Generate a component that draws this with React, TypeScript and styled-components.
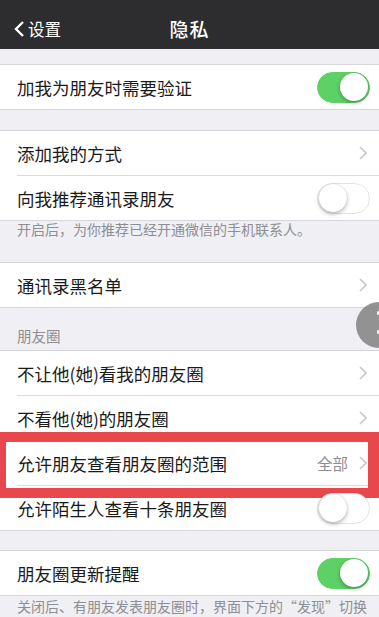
import React from 'react'
import styled, { createGlobalStyle } from 'styled-components'

const GlobalStyle = createGlobalStyle`
  html, body {
    margin: 0;
    padding: 0;
    background: #efeff4;
  }
  body {
    font-family: 'Noto Sans CJK SC', 'Noto Sans', sans-serif;
    overflow: hidden;
  }
`

const Page = styled.div`
  position: relative;
  width: 379px;
  height: 617px;
  overflow: hidden;
  background: #efeff4;
`

const NavBar = styled.div`
  height: 49px;
  padding-top: 8px;
  box-sizing: border-box;
  background: #2d2d30;
  display: grid;
  grid-template-columns: 1fr auto 1fr;
  align-items: center;
  color: #fff;
`

const BackButton = styled.div`
  display: flex;
  align-items: center;
  gap: 3px;
  padding-left: 13px;
  font-size: 16.5px;
`

const Title = styled.div`
  font-size: 19px;
  font-weight: 500;
  letter-spacing: 1px;
`

const Group = styled.div<{ $gap: number }>`
  margin-top: ${(p) => p.$gap}px;
  background: #fff;
  border-top: 1px solid #d6d6da;
  border-bottom: 1px solid #d6d6da;
`

const Row = styled.div`
  position: relative;
  height: 44px;
  display: flex;
  align-items: center;
  padding: 0 9px 0 17px;
  font-size: 17.5px;
  color: #1a1a1a;
`

const Label = styled.span`
  flex: 1;
  white-space: nowrap;
`

const Separator = styled.div`
  height: 1px;
  margin-left: 17px;
  background: #dcdce0;
`

const Detail = styled.span`
  font-size: 15.5px;
  color: #8e8e93;
  margin-right: 11px;
`

const Chevron = styled.svg`
  width: 8px;
  height: 14px;
  margin-right: 3px;
`

const Track = styled.div<{ $on: boolean }>`
  width: 53px;
  height: 31px;
  box-sizing: border-box;
  border-radius: 16px;
  display: flex;
  align-items: center;
  justify-content: ${(p) => (p.$on ? 'flex-end' : 'flex-start')};
  padding: 0 1px;
  background: ${(p) => (p.$on ? '#5dd166' : '#fff')};
  border: 1.5px solid ${(p) => (p.$on ? '#5dd166' : '#e4e4e8')};
`

const Knob = styled.div`
  width: 28px;
  height: 28px;
  border-radius: 50%;
  background: #fff;
  box-shadow: 0 2px 4px rgba(0, 0, 0, 0.28), 0 0 1px rgba(0, 0, 0, 0.2);
`

const Note = styled.div<{ $top: number; $bottom: number }>`
  padding: ${(p) => p.$top}px 6px ${(p) => p.$bottom}px 17px;
  font-size: 14px;
  line-height: 17px;
  color: #8e8e93;
`

const SectionHeader = styled.div`
  padding: 19px 17px 5px;
  font-size: 14.5px;
  line-height: 18px;
  color: #8e8e93;
`

const Highlight = styled.div`
  position: absolute;
  top: -9px;
  bottom: -13px;
  left: 0;
  right: 0;
  border-style: solid;
  border-color: #e8474c;
  border-width: 10px 11px 10px 6px;
  pointer-events: none;
`

const FloatingButton = styled.svg`
  position: absolute;
  top: 302px;
  left: 356px;
  width: 46px;
  height: 46px;
`

const ChevronIcon = () => (
  <Chevron viewBox="0 0 8 14">
    <path d="M1 1 L7 7 L1 13" fill="none" stroke="#c7c7cc" strokeWidth="1.6" />
  </Chevron>
)

const Toggle = ({ on }: { on: boolean }) => (
  <Track $on={on}>
    <Knob />
  </Track>
)

export default function App() {
  return (
    <Page>
      <GlobalStyle />
      <NavBar>
        <BackButton>
          <svg width="12" height="16" viewBox="0 0 12 16">
            <path d="M10 1 L3 8 L10 15" fill="none" stroke="#fff" strokeWidth="2.4" />
          </svg>
          设置
        </BackButton>
        <Title>隐私</Title>
        <div />
      </NavBar>

      <Group $gap={15}>
        <Row>
          <Label>加我为朋友时需要验证</Label>
          <Toggle on />
        </Row>
      </Group>

      <Group $gap={20}>
        <Row>
          <Label>添加我的方式</Label>
          <ChevronIcon />
        </Row>
        <Separator />
        <Row>
          <Label>向我推荐通讯录朋友</Label>
          <Toggle on={false} />
        </Row>
      </Group>
      <Note $top={0} $bottom={24}>开启后，为你推荐已经开通微信的手机联系人。</Note>

      <Group $gap={0}>
        <Row>
          <Label>通讯录黑名单</Label>
          <ChevronIcon />
        </Row>
      </Group>

      <SectionHeader>朋友圈</SectionHeader>
      <Group $gap={0}>
        <Row>
          <Label>不让他(她)看我的朋友圈</Label>
          <ChevronIcon />
        </Row>
        <Separator />
        <Row>
          <Label>不看他(她)的朋友圈</Label>
          <ChevronIcon />
        </Row>
        <Separator />
        <Row>
          <Label>允许朋友查看朋友圈的范围</Label>
          <Detail>全部</Detail>
          <ChevronIcon />
          <Highlight />
        </Row>
        <Separator />
        <Row>
          <Label>允许陌生人查看十条朋友圈</Label>
          <Toggle on={false} />
        </Row>
      </Group>

      <Group $gap={19}>
        <Row>
          <Label>朋友圈更新提醒</Label>
          <Toggle on />
        </Row>
      </Group>
      <Note $top={2} $bottom={8}>
        关闭后、有朋友发表朋友圈时，界面下方的“发现”切换按钮上不再出现红点提示。
      </Note>

      <FloatingButton viewBox="0 0 46 46">
        <circle cx="23" cy="23" r="23" fill="#8a8a8a" fillOpacity="0.92" />
        <rect x="21" y="9" width="2" height="4" rx="1" fill="#f2f2f2" />
        <rect x="21" y="28" width="2" height="4" rx="1" fill="#f2f2f2" />
      </FloatingButton>
    </Page>
  )
}
